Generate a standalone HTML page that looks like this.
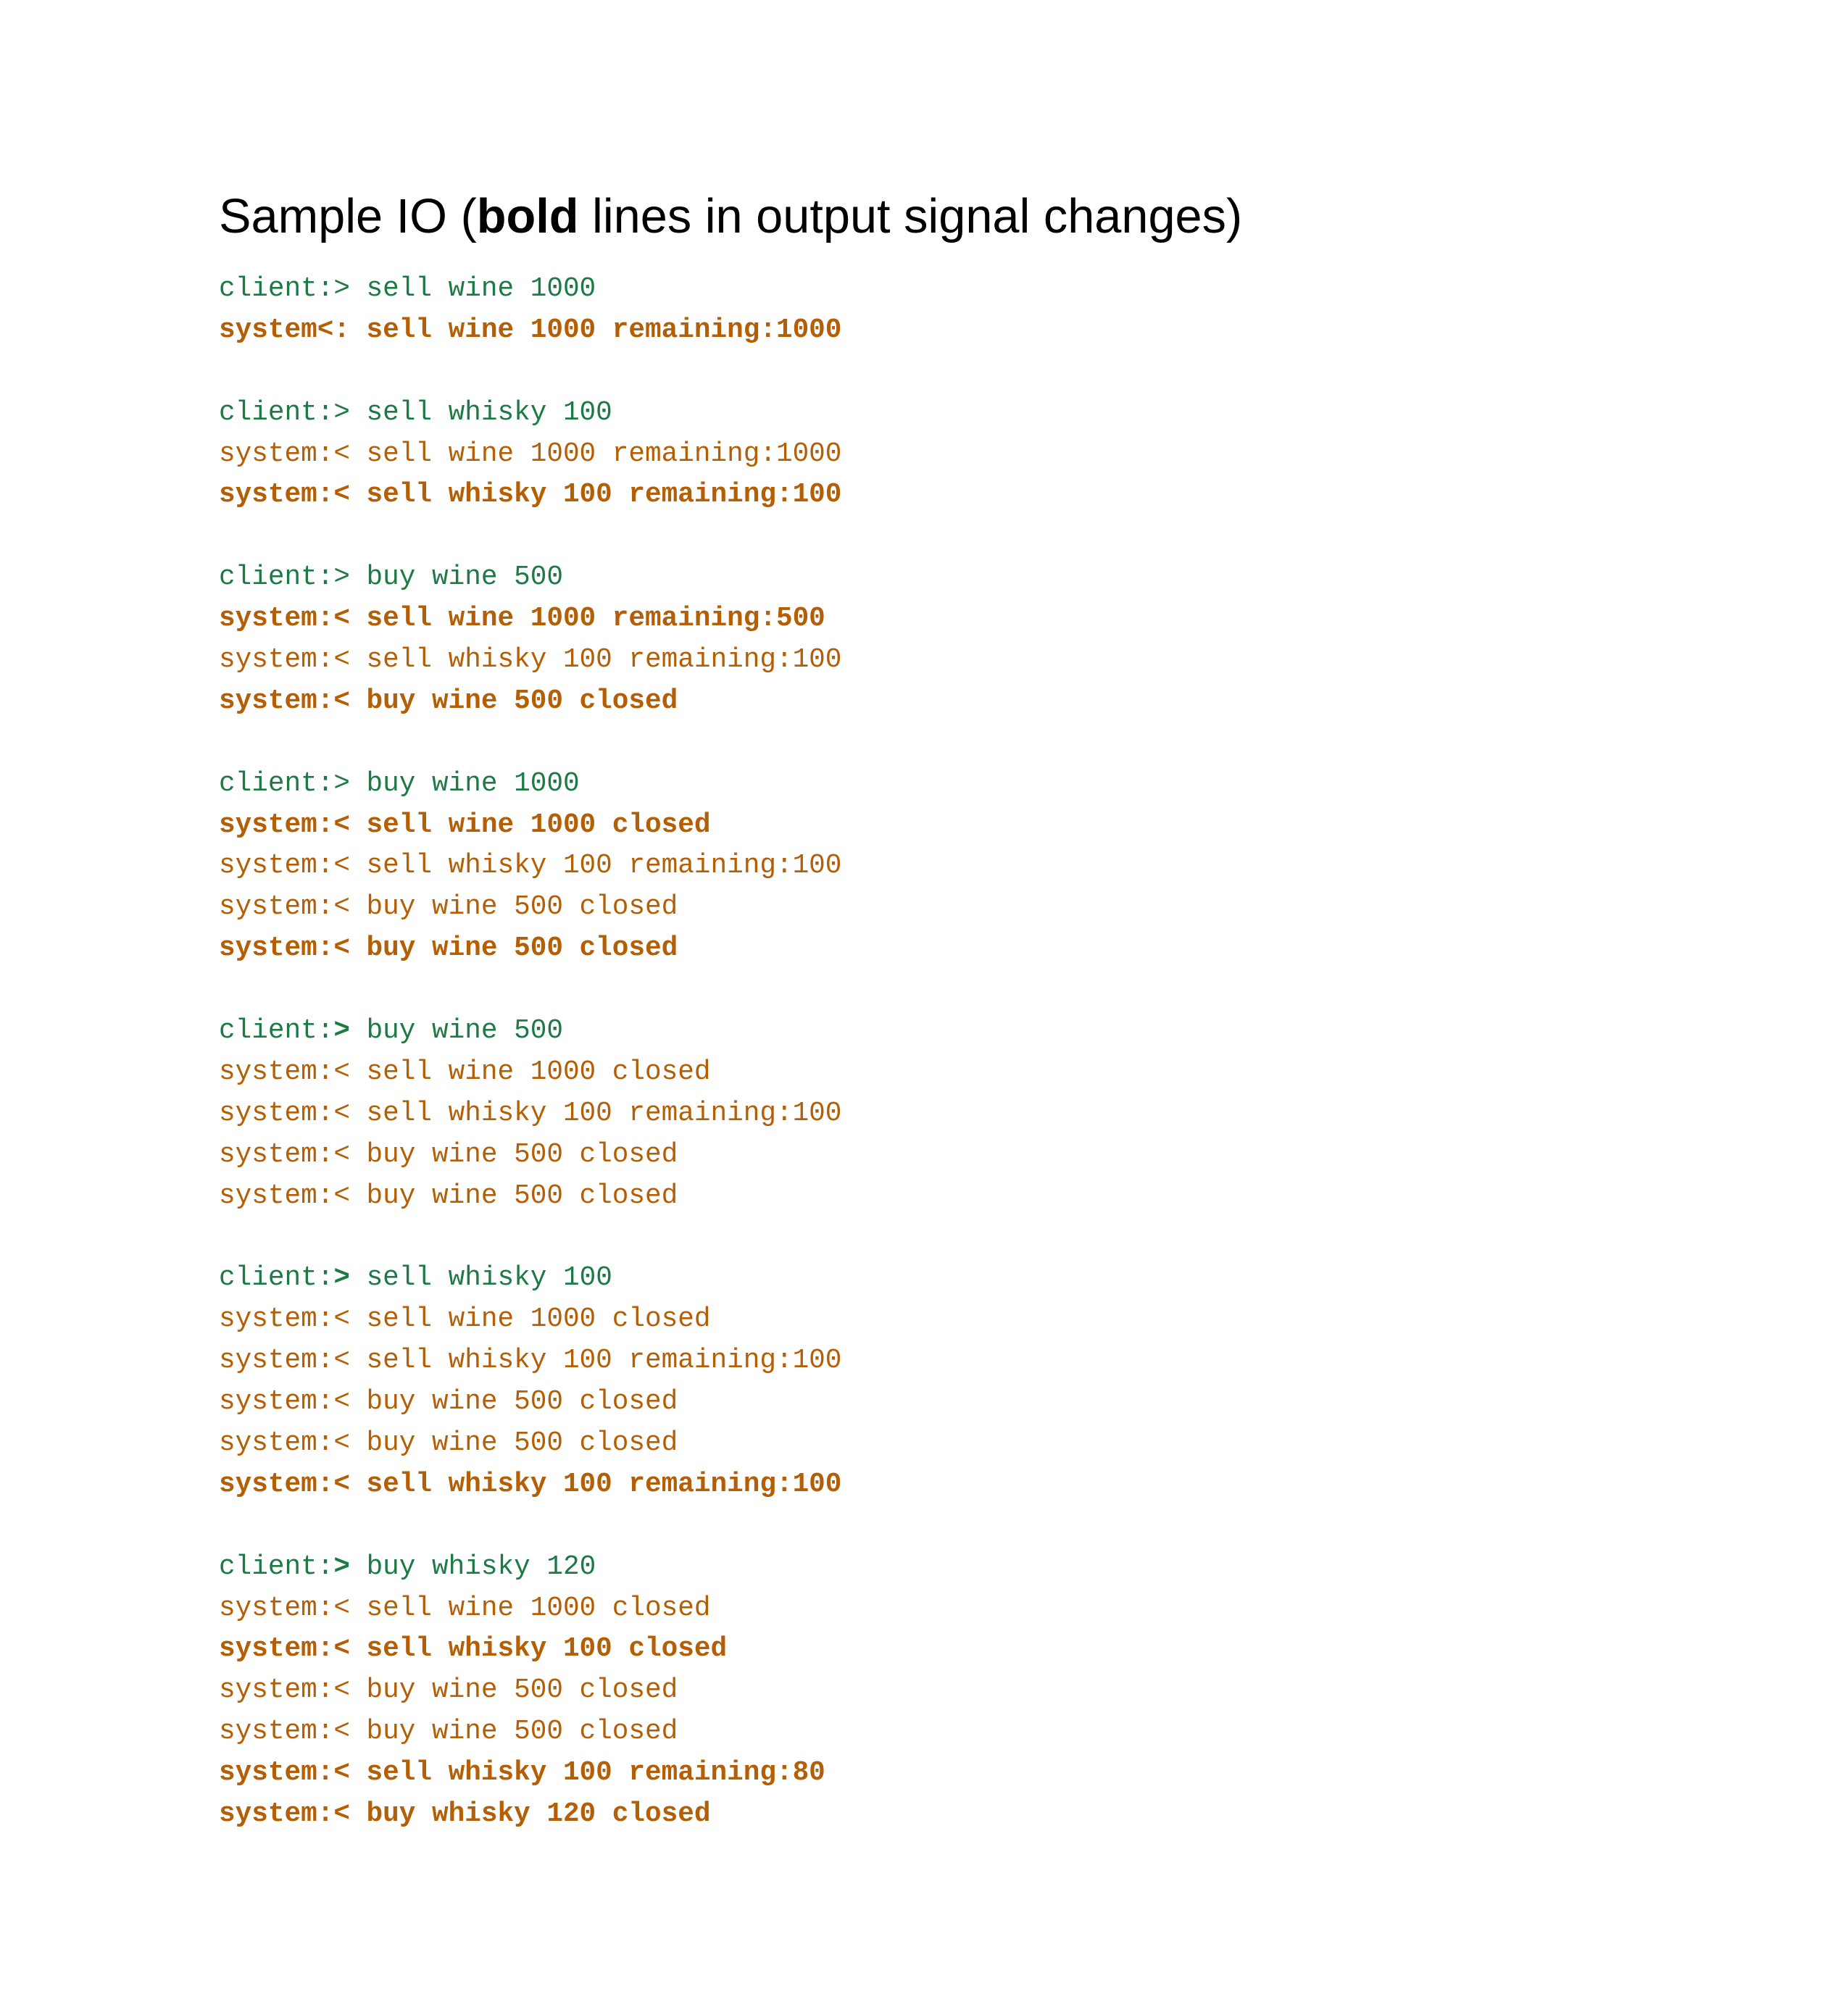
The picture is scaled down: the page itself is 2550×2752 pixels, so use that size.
<!DOCTYPE html>
<html><head><meta charset="utf-8"><style>
html,body{margin:0;padding:0;background:#fff;}
body{width:2550px;height:2752px;position:relative;overflow:hidden;}
h1{position:absolute;left:302px;top:259px;margin:0;font:400 66.7px/80px "Liberation Sans",sans-serif;color:#000;white-space:nowrap;}
h1 b{font-weight:700;}
#code{position:absolute;left:302px;top:371px;font-family:"Liberation Mono",monospace;font-size:37.7px;line-height:56.9px;}
#code div{white-space:pre;height:56.9px;}
.c{color:#1e7a45;}
.s{color:#b45f06;}
.b{font-weight:700;}
</style></head><body>
<h1>Sample IO (<b>bold</b> lines in output signal changes)</h1>
<div id="code">
<div class="c">client:&gt; sell wine 1000</div>
<div class="s b">system&lt;: sell wine 1000 remaining:1000</div>
<div> </div>
<div class="c">client:&gt; sell whisky 100</div>
<div class="s">system:&lt; sell wine 1000 remaining:1000</div>
<div class="s b">system:&lt; sell whisky 100 remaining:100</div>
<div> </div>
<div class="c">client:&gt; buy wine 500</div>
<div class="s b">system:&lt; sell wine 1000 remaining:500</div>
<div class="s">system:&lt; sell whisky 100 remaining:100</div>
<div class="s b">system:&lt; buy wine 500 closed</div>
<div> </div>
<div class="c">client:&gt; buy wine 1000</div>
<div class="s b">system:&lt; sell wine 1000 closed</div>
<div class="s">system:&lt; sell whisky 100 remaining:100</div>
<div class="s">system:&lt; buy wine 500 closed</div>
<div class="s b">system:&lt; buy wine 500 closed</div>
<div> </div>
<div class="c">client:<b>&gt;</b> buy wine 500</div>
<div class="s">system:&lt; sell wine 1000 closed</div>
<div class="s">system:&lt; sell whisky 100 remaining:100</div>
<div class="s">system:&lt; buy wine 500 closed</div>
<div class="s">system:&lt; buy wine 500 closed</div>
<div> </div>
<div class="c">client:<b>&gt;</b> sell whisky 100</div>
<div class="s">system:&lt; sell wine 1000 closed</div>
<div class="s">system:&lt; sell whisky 100 remaining:100</div>
<div class="s">system:&lt; buy wine 500 closed</div>
<div class="s">system:&lt; buy wine 500 closed</div>
<div class="s b">system:&lt; sell whisky 100 remaining:100</div>
<div> </div>
<div class="c">client:<b>&gt;</b> buy whisky 120</div>
<div class="s">system:&lt; sell wine 1000 closed</div>
<div class="s b">system:&lt; sell whisky 100 closed</div>
<div class="s">system:&lt; buy wine 500 closed</div>
<div class="s">system:&lt; buy wine 500 closed</div>
<div class="s b">system:&lt; sell whisky 100 remaining:80</div>
<div class="s b">system:&lt; buy whisky 120 closed</div>
</div>
</body></html>
